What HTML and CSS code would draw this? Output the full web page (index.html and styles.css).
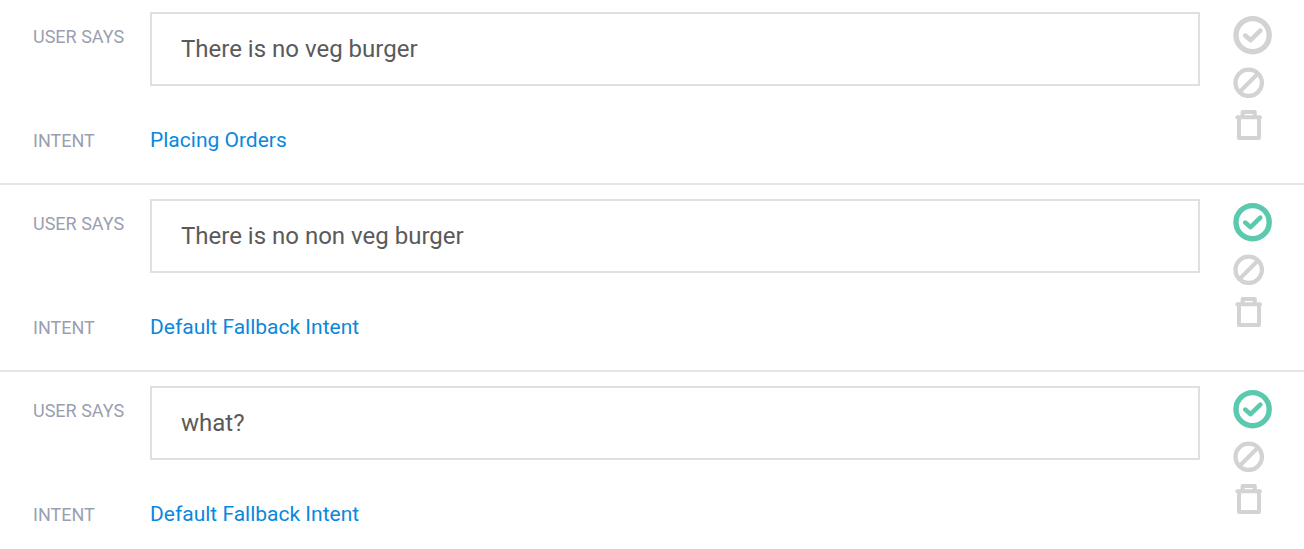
FILE: index.html
```html
<!DOCTYPE html>
<html lang="en">
<head>
<meta charset="utf-8">
<title>Training phrases</title>
<link rel="stylesheet" href="styles.css">
</head>
<body>
<svg class="sprite" aria-hidden="true">
  <symbol id="approve" viewBox="0 0 40 40"><circle cx="20.600" cy="20.200" r="16.600" stroke-width="5.400"/><path d="M13.200 20.600L18.600 25.200L28.300 15.600" stroke-width="4.600"/></symbol>
  <symbol id="ignore" viewBox="0 0 32 32"><circle cx="16.700" cy="16.800" r="13.200" stroke-width="4.300"/><path d="M8 25.500L25.500 8"/></symbol>
  <symbol id="trash" viewBox="0 0 32 32"><path d="M5.300 8.200H28M10.600 7V3H22.800V7M7 9V29H27V9"/></symbol>
</svg>
<main class="list">
  <section class="entry">
    <label class="label" for="says-1">USER SAYS</label>
    <input class="phrase" id="says-1" type="text" value="There is no veg burger">
    <span class="label label-intent">INTENT</span>
    <a class="intent" href="#">Placing Orders</a>
    <div class="actions">
      <button class="action approve" type="button" aria-label="Approve"><svg><use href="#approve"/></svg></button>
      <button class="action" type="button" aria-label="Ignore"><svg><use href="#ignore"/></svg></button>
      <button class="action" type="button" aria-label="Delete"><svg><use href="#trash"/></svg></button>
    </div>
  </section>
  <section class="entry">
    <label class="label" for="says-2">USER SAYS</label>
    <input class="phrase" id="says-2" type="text" value="There is no non veg burger">
    <span class="label label-intent">INTENT</span>
    <a class="intent" href="#">Default Fallback Intent</a>
    <div class="actions">
      <button class="action approve approved" type="button" aria-label="Approve"><svg><use href="#approve"/></svg></button>
      <button class="action" type="button" aria-label="Ignore"><svg><use href="#ignore"/></svg></button>
      <button class="action" type="button" aria-label="Delete"><svg><use href="#trash"/></svg></button>
    </div>
  </section>
  <section class="entry">
    <label class="label" for="says-3">USER SAYS</label>
    <input class="phrase" id="says-3" type="text" value="what?">
    <span class="label label-intent">INTENT</span>
    <a class="intent" href="#">Default Fallback Intent</a>
    <div class="actions">
      <button class="action approve approved" type="button" aria-label="Approve"><svg><use href="#approve"/></svg></button>
      <button class="action" type="button" aria-label="Ignore"><svg><use href="#ignore"/></svg></button>
      <button class="action" type="button" aria-label="Delete"><svg><use href="#trash"/></svg></button>
    </div>
  </section>
</main>
</body>
</html>
```
FILE: styles.css
```css
* { box-sizing: border-box; }
body {
  margin: 0;
  background: #fff;
  font-family: Roboto, "Liberation Sans", sans-serif;
}
.sprite { display: none; }
.entry {
  display: grid;
  grid-template-columns: 117px 1fr 40px;
  grid-template-rows: 74px auto;
  row-gap: 40px;
  padding: 12px 32px 29px 33px;
  border-bottom: 2px solid #e6e6e6;
}
.entry + .entry { padding-top: 14px; }
.entry:last-child { border-bottom: 0; padding-bottom: 0; }
.label {
  padding-top: 13px;
  color: #9a9fb0;
  font-size: 18px;
  line-height: 24px;
}
.label-intent { padding-top: 3px; }
.phrase {
  justify-self: start;
  width: calc(100% - 32px);
  height: 74px;
  padding: 0 29px;
  border: 2px solid #e0e0e0;
  border-radius: 0;
  background: #fff;
  color: #5a5a5a;
  font: 24px Roboto, "Liberation Sans", sans-serif;
}
.intent {
  justify-self: start;
  color: #0a88dc;
  font-size: 21px;
  line-height: 28px;
  text-decoration: none;
}
.actions {
  grid-column: 3;
  grid-row: 1 / 3;
  display: flex;
  flex-direction: column;
  align-items: flex-start;
  gap: 11px;
  padding-top: 3px;
}
.action {
  width: 32px;
  height: 32px;
  padding: 0;
  border: 0;
  background: none;
  color: #d3d3d3;
}
.approve { width: 40px; height: 40px; }
.approved { color: #5bc9ad; }
.action svg {
  display: block;
  width: 100%;
  height: 100%;
  fill: none;
  stroke: currentColor;
  stroke-width: 4;
  stroke-linecap: round;
  stroke-linejoin: round;
}
```
